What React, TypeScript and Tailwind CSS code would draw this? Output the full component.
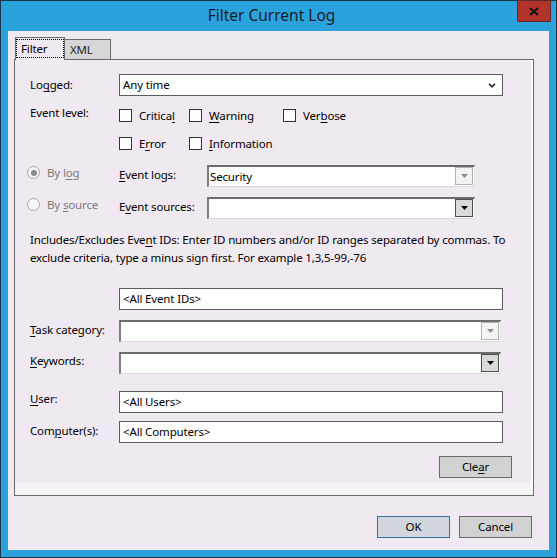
import React from 'react';

// Classic Windows "Filter Current Log" dialog (Event Viewer, Server 2012 frame)

const U = ({ children }: { children: React.ReactNode }) => (
  <span className="underline decoration-1 underline-offset-[2px]">{children}</span>
);

const Check = ({ children, width }: { children: React.ReactNode; width: string }) => (
  <div className={`flex items-center gap-[7px] ${width}`}>
    <span className="w-[13px] h-[13px] border border-[#333] bg-white shrink-0" />
    <span className="leading-none">{children}</span>
  </div>
);

const Radio = ({ checked, children }: { checked?: boolean; children: React.ReactNode }) => (
  <div className="flex items-center gap-[7px] w-[92px] text-[#7a7a7a]">
    <span className="w-[13px] h-[13px] rounded-full border border-[#a8a8a8] bg-[#f6f6f6] flex items-center justify-center shrink-0">
      {checked && <span className="w-[6px] h-[6px] rounded-full bg-[#8a8a8a]" />}
    </span>
    <span className="leading-none">{children}</span>
  </div>
);

const Arrow = ({ color }: { color: string }) => (
  <svg width="7" height="4" viewBox="0 0 7 4">
    <path d="M0 0h7L3.5 4z" fill={color} />
  </svg>
);

const SunkenCombo = ({ value, enabled, width }: { value?: string; enabled?: boolean; width: string }) => (
  <div
    className={`${width} h-[22px] bg-white border-t-2 border-l-2 border-t-[#6b6b6b] border-l-[#7d7d7d] border-b border-r border-b-[#d9d9d9] border-r-[#e6e6e6] flex items-start pr-[1px]`}
  >
    <span className="flex-1 pl-[1px] leading-[19px]">{value}</span>
    {enabled ? (
      <span className="w-[18px] h-[18px] border border-[#4d4d4d] bg-[#d9d9d9] flex items-center justify-center">
        <Arrow color="#000" />
      </span>
    ) : (
      <span className="w-[18px] h-[18px] border border-[#b4b4b4] bg-[#f3f3f3] flex items-center justify-center">
        <Arrow color="#8c8c8c" />
      </span>
    )}
  </div>
);

const TextBox = ({ value }: { value: string }) => (
  <div className="w-[384px] h-[22px] bg-white border border-[#5b5b5b] pl-[3px] leading-[20px]">{value}</div>
);

const Btn = ({ children, primary }: { children: React.ReactNode; primary?: boolean }) => (
  <div
    className={`w-[73px] h-[22px] flex items-center justify-center ${
      primary ? 'border border-[#3a6fa0] bg-[#d3d6dc]' : 'border border-[#6a6a6a] bg-[#d2d2d2]'
    }`}
  >
    {children}
  </div>
);

export default function App() {
  return (
    <div className="relative w-[557px] h-[558px] bg-[#2aa3dc] border border-[#1c3646] flex flex-col font-['Noto_Sans',sans-serif] text-[11.5px] tracking-[-0.15px] text-black">
      {/* title bar */}
      <div className="h-[30px] flex items-center justify-center pr-[14px]">
        <span className="text-[15.5px] tracking-normal text-[#1c1c2c] leading-none">Filter Current Log</span>
      </div>
      <div className="absolute top-[-1px] right-[5px] w-[34px] h-[22px] bg-[#b2332b] border border-[#5e2a2a] flex items-center justify-center">
        <svg width="10" height="9" viewBox="0 0 10 9">
          <path d="M1 1l8 7M9 1L1 8" stroke="#111" strokeWidth="2.2" />
        </svg>
      </div>

      {/* client area */}
      <div className="ml-[7px] w-[541px] h-[519px] bg-[#f0e9f1] flex flex-col">
        {/* tabs */}
        <div className="mt-[6px] ml-[7px] h-[22px] flex items-end">
          <div className="relative z-10 w-[50px] h-[23px] -mb-px bg-[#f0e9f1] border-l border-t border-r border-[#6a6a6a] pt-[1px]">
            <div className="h-[19px] border border-dotted border-black flex items-center pl-[4px]">Filter</div>
          </div>
          <div className="w-[46px] h-[20px] bg-[#d9d6da] border-t border-r border-[#6a6a6a] pl-[5px] leading-[19px] text-[#222]">
            XML
          </div>
        </div>

        {/* tab page */}
        <div className="ml-[6px] w-[520px] h-[437px] border border-[#6a6a6a] flex flex-col">
          <div className="flex-1 border-r-2 border-b-[12px] border-r-white border-b-[#f6f3f7] flex flex-col pl-[15px]">
            {/* Logged */}
            <div className="mt-[14px] flex items-start">
              <span className="w-[89px] pt-[2px]">
                Lo<U>g</U>ged:
              </span>
              <div className="w-[384px] h-[22px] bg-white border border-[#5b5b5b] pl-[3px] flex items-center justify-between pr-[6px]">
                <span>Any time</span>
                <svg width="8" height="5" viewBox="0 0 8 5">
                  <path d="M1 0.8l3 3 3-3" stroke="#222" strokeWidth="1.6" fill="none" />
                </svg>
              </div>
            </div>

            {/* Event level */}
            <div className="mt-[13px] flex items-start h-[13px]">
              <span className="w-[89px] -mt-[5px]">Event level:</span>
              <Check width="w-[70px]">
                Critica<U>l</U>
              </Check>
              <Check width="w-[94px]">
                <U>W</U>arning
              </Check>
              <Check width="w-[90px]">
                Ver<U>b</U>ose
              </Check>
            </div>
            <div className="mt-[15px] flex items-start h-[13px] pl-[89px]">
              <Check width="w-[70px]">
                E<U>r</U>ror
              </Check>
              <Check width="w-[120px]">
                <U>I</U>nformation
              </Check>
            </div>

            {/* By log / By source */}
            <div className="mt-[15px] -ml-[3px] flex items-start">
              <div className="pt-[1px]">
                <Radio checked>
                  By l<U>o</U>g
                </Radio>
              </div>
              <span className="w-[88px] pt-[1px]">
                <U>E</U>vent logs:
              </span>
              <SunkenCombo value="Security" width="w-[268px]" />
            </div>
            <div className="mt-[10px] -ml-[3px] flex items-start">
              <div className="pt-[1px]">
                <Radio>
                  By <U>s</U>ource
                </Radio>
              </div>
              <span className="w-[88px] pt-[1px]">
                E<U>v</U>ent sources:
              </span>
              <SunkenCombo enabled width="w-[268px]" />
            </div>

            {/* description */}
            <div className="mt-[12px] leading-[18px] whitespace-nowrap">
              Includes/Excludes Eve<U>n</U>t IDs: Enter ID numbers and/or ID ranges separated by commas. To
              <br />
              exclude criteria, type a minus sign first. For example 1,3,5-99,-76
            </div>

            <div className="mt-[21px] pl-[89px]">
              <TextBox value="<All Event IDs>" />
            </div>

            <div className="mt-[10px] flex items-start">
              <span className="w-[89px] pt-[1px]">
                <U>T</U>ask category:
              </span>
              <SunkenCombo width="w-[382px]" />
            </div>
            <div className="mt-[10px] flex items-start">
              <span className="w-[89px]">
                <U>K</U>eywords:
              </span>
              <SunkenCombo enabled width="w-[382px]" />
            </div>

            <div className="mt-[17px] flex items-start">
              <span className="w-[89px] -mt-[1px]">
                <U>U</U>ser:
              </span>
              <TextBox value="<All Users>" />
            </div>
            <div className="mt-[8px] flex items-start">
              <span className="w-[89px] pt-[1px]">
                Com<U>p</U>uter(s):
              </span>
              <TextBox value="<All Computers>" />
            </div>

            <div className="mt-[13px] flex justify-end pr-[19px]">
              <Btn>
                Cle<U>a</U>r
              </Btn>
            </div>
          </div>
        </div>

        {/* dialog buttons */}
        <div className="mt-[20px] flex justify-end gap-[9px] pr-[17px]">
          <Btn primary>OK</Btn>
          <Btn>Cancel</Btn>
        </div>
      </div>
    </div>
  );
}
